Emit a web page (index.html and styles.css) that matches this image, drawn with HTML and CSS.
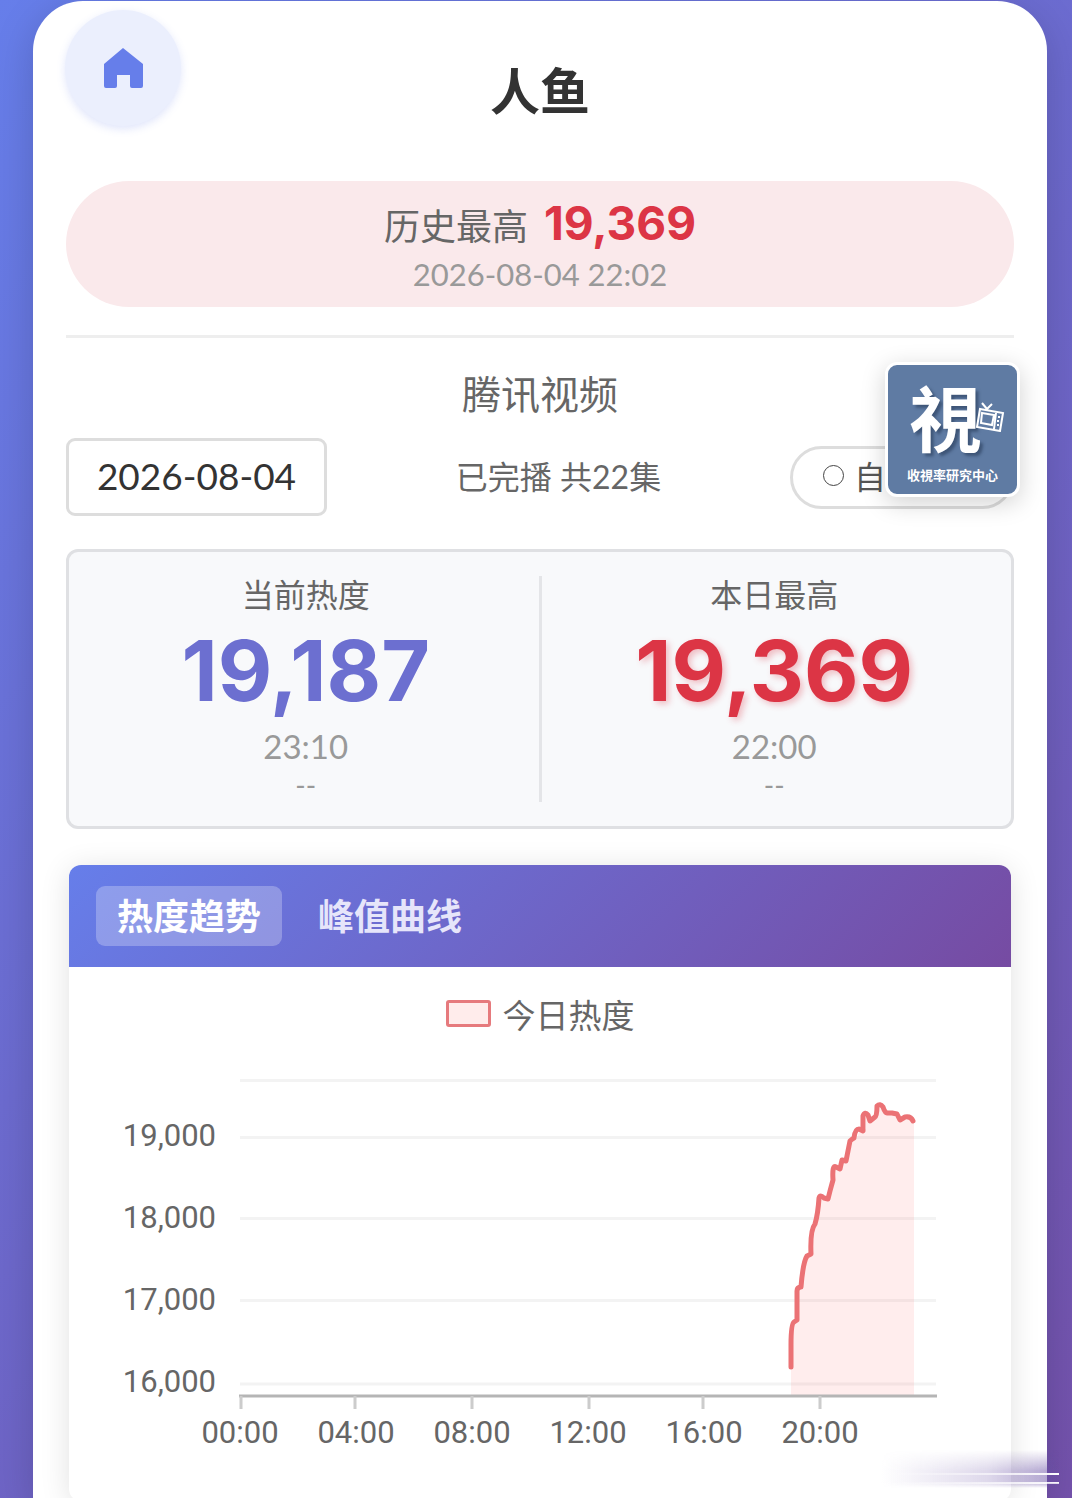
FILE: index.html
```html
<!DOCTYPE html>
<html lang="zh-CN">
<head>
<meta charset="utf-8">
<meta name="viewport" content="width=device-width, initial-scale=1">
<title>人鱼</title>
<link rel="stylesheet" href="styles.css">
</head>
<body>
<main class="container">
  <header class="header">
    <a class="home" href="#" aria-label="首页">
      <svg viewBox="0 0 40 40" width="40" height="40" aria-hidden="true"><path d="M20 0 L40 16 V38 Q40 40 38 40 H29 Q27 40 27 38 V27 H14 V38 Q14 40 12 40 H3 Q1 40 1 38 V16 Z"/></svg>
    </a>
    <h1 class="title">人鱼</h1>
  </header>

  <section class="record">
    <div class="record-line"><span class="record-label">历史最高</span><strong class="record-value">19,369</strong></div>
    <time class="record-time">2026-08-04 22:02</time>
  </section>

  <section class="platform">
    <h2 class="platform-name">腾讯视频</h2>
    <div class="controls">
      <input class="date" type="text" value="2026-08-04" aria-label="日期">
      <span class="status">已完播 共22集</span>
      <button class="toggle" type="button"><span class="dot"></span>自</button>
    </div>
  </section>

  <section class="stats">
    <div class="stat">
      <span class="stat-label">当前热度</span>
      <strong class="stat-value">19,187</strong>
      <time class="stat-time">23:10</time>
      <span class="stat-note">--</span>
    </div>
    <div class="divider"></div>
    <div class="stat">
      <span class="stat-label">本日最高</span>
      <strong class="stat-value peak">19,369</strong>
      <time class="stat-time">22:00</time>
      <span class="stat-note">--</span>
    </div>
  </section>

  <section class="chart-card">
    <nav class="tabs">
      <button class="tab active" type="button">热度趋势</button>
      <button class="tab" type="button">峰值曲线</button>
    </nav>
    <div class="legend"><span class="swatch"></span>今日热度</div>
    <svg class="chart" viewBox="0 0 942 438" role="img" aria-label="今日热度">
      <g class="grid">
        <path d="M171 20.500H867M171 77.500H867M171 158.500H867M171 240.500H867M171 324H867"/>
      </g>
      <path class="area" d="M722 307L723 270L725 262L728 260L728 228L733 224L737 198L742 194L743 174L745 164L748 155L751 136L755 138L759 140L761 136L765 120L765 109L770 107L772 110L775 100L779 100L784 80L788 78L791 69L797 69L797 54L801 54L803 60L808 57L810 46L815 47L818 53L828 55L831 59L838 57L845 61V335H722Z"/>
      <path class="line" d="M722 307L722 285Q722 264 725 262L728 260L728 231Q728 227 732 227Q734 202 738 196L742 194Q741 170 746 164Q749 154 750 138Q751 134 755 138L759 139L761 131L764 120Q763 104 767 107L771 109L773 100L777 101L781 81Q783 79 785 78Q786 69 790 69L794 71L794 56Q796 51 799 55L801 61L806 57Q808 56 808 46Q811 43 814 47Q816 53 818 53L823 53L828 54L831 60L836 57Q842 56 844 61"/>
      <g class="axis"><path d="M170 336H868"/><path class="ticks" d="M172 336V349M286 336V349M403 336V349M520 336V349M634 336V349M751 336V349"/></g>
      <g class="y-labels">
        <text x="147" y="86">19,000</text><text x="147" y="168">18,000</text><text x="147" y="250">17,000</text><text x="147" y="332">16,000</text>
      </g>
      <g class="x-labels">
        <text x="171" y="383">00:00</text><text x="287" y="383">04:00</text><text x="403" y="383">08:00</text><text x="519" y="383">12:00</text><text x="635" y="383">16:00</text><text x="751" y="383">20:00</text>
      </g>
    </svg>
  </section>
</main>

<aside class="badge" aria-label="收視率研究中心">
  <span class="badge-mark">視</span>
  <svg class="badge-tv" viewBox="0 0 32 32" width="32" height="32" aria-hidden="true"><path d="M5 9L28 13L25 31L2 27ZM7 13L19 15L17 25L6 23ZM21 13L19 29M12 9L7 3M12 9L17 4"/><path d="M23 17H25M22 21H24M22 25H24"/></svg>
  <span class="badge-name">收視率研究中心</span>
</aside>
<div class="smear" aria-hidden="true"></div>
</body>
</html>
```
FILE: styles.css
```css
* { box-sizing: border-box; }
body {
  position: relative;
  margin: 0;
  min-height: 100vh;
  padding: 1px 25px 0 33px;
  font-family: Lato, "Noto Sans CJK SC", sans-serif;
  color: #666;
  background: linear-gradient(135deg, #667eea 0%, #764ba2 115%);
}
button, input { font-family: inherit; }
.container {
  min-height: calc(100vh - 1px);
  padding: 0 33px;
  background: #fff;
  border-radius: 50px 50px 0 0;
  box-shadow: 0 10px 40px rgba(0, 0, 0, .17);
}
.header {
  position: relative;
  display: flex;
  align-items: center;
  justify-content: center;
  height: 180px;
}
.home {
  position: absolute;
  left: -1px;
  top: 9px;
  display: flex;
  align-items: center;
  justify-content: center;
  width: 116px;
  height: 116px;
  border-radius: 50%;
  background: #ebeffd;
  box-shadow: 0 3px 9px rgba(102, 126, 234, .2);
  fill: #667eea;
}
.title { margin: 0; font-size: 50px; line-height: 60px; color: #333; }
.record {
  display: flex;
  flex-direction: column;
  align-items: center;
  height: 126px;
  padding-top: 12px;
  border-radius: 63px;
  background: #fae9eb;
}
.record-line { display: flex; align-items: baseline; gap: 16px; height: 65px; line-height: 60px; }
.record-label { font-size: 36px; }
.record-value { font-family: Inter, sans-serif; font-size: 46px; color: #dc3545; }
.record-time { font-size: 31px; line-height: 32px; color: #999; }
.platform { margin-top: 28px; border-top: 3px solid #eee; padding-top: 31px; }
.platform-name { margin: 0; font-size: 39px; font-weight: 400; line-height: 50px; text-align: center; }
.controls {
  display: flex;
  align-items: center;
  justify-content: space-between;
  margin-top: 19px;
}
.date {
  width: 261px;
  height: 78px;
  padding: 0 0 4px;
  border: 3px solid #ddd;
  border-radius: 9px;
  background: #fff;
  font-size: 37px;
  text-align: center;
  color: #333;
}
.status { padding-bottom: 4px; font-size: 32px; }
.toggle {
  display: flex;
  align-items: center;
  gap: 10px;
  width: 224px;
  height: 63px;
  padding: 0 30px 4px;
  border: 3px solid #ddd;
  border-radius: 32px;
  background: #fff;
  font-size: 32px;
  color: #555;
}
.dot { width: 21px; height: 21px; border: 1px solid #444; border-radius: 50%; }
.stats {
  display: grid;
  grid-template-columns: 1fr 3px 1fr;
  margin-top: 33px;
  padding: 24px 4px;
  border: 3px solid #dfe0e3;
  border-radius: 12px;
  background: #f8f9fb;
}
.stat { display: flex; flex-direction: column; align-items: center; height: 226px; }
.divider { background: #e4e5e8; }
.stat-label { font-size: 32px; line-height: 38px; }
.stat-value { font-family: Inter, sans-serif; font-size: 84px; line-height: 114px; color: #6c6fd0; }
.stat-value.peak { color: #dc3545; text-shadow: 3px 3px 6px rgba(220, 53, 69, .3); }
.stat-time { font-size: 33px; line-height: 36px; color: #999; }
.stat-note { font-size: 28px; line-height: 42px; color: #999; }
.chart-card {
  margin: 36px 3px 0;
  padding-bottom: 3px;
  border-radius: 12px;
  background: #fff;
  box-shadow: 0 4px 30px rgba(0, 0, 0, .12);
}
.tabs {
  display: flex;
  align-items: center;
  gap: 15px;
  height: 102px;
  padding: 0 27px;
  border-radius: 12px 12px 0 0;
  background: linear-gradient(135deg, #667eea 0%, #764ba2 100%);
}
.tab {
  height: 60px;
  padding: 0 21px;
  border: 0;
  border-radius: 9px;
  background: none;
  font-size: 36px;
  font-weight: 700;
  line-height: 60px;
  color: #e6e5fa;
}
.tab.active { background: rgba(255, 255, 255, .26); color: #fff; }
.legend {
  display: flex;
  align-items: center;
  justify-content: center;
  gap: 12px;
  height: 93px;
  font-size: 33px;
}
.swatch { width: 45px; height: 27px; border: 3px solid #e67a7d; border-radius: 3px; background: #ffeceb; }
.chart { display: block; width: 100%; }
.grid { stroke: #f3f3f3; stroke-width: 3; fill: none; }
.area { fill: #ff6b6b; fill-opacity: .12; }
.line { fill: none; stroke: #eb7275; stroke-width: 5; stroke-linejoin: round; stroke-linecap: round; }
.axis { stroke: #b5b5b5; stroke-width: 3; fill: none; }
.ticks { stroke: #ccc; }
.y-labels, .x-labels { font-family: Roboto, sans-serif; font-size: 31px; fill: #666; }
.y-labels { text-anchor: end; }
.x-labels { text-anchor: middle; }
.badge {
  position: absolute;
  top: 362px;
  right: 52px;
  width: 135px;
  height: 135px;
  border: 3px solid #fff;
  border-radius: 12px;
  background: #5f7ba3;
  box-shadow: 0 6px 24px rgba(0, 0, 0, .18);
  color: #fff;
  text-align: center;
}
.badge-mark {
  display: block;
  padding-right: 14px;
  font-family: "Noto Sans CJK TC", sans-serif;
  font-size: 72px;
  font-weight: 700;
  line-height: 100px;
  text-shadow: 3px 3px 3px rgba(40, 60, 90, .6);
}
.badge-tv { position: absolute; left: 87px; top: 35px; fill: #5f7ba3; stroke: #fff; stroke-width: 2; }
.badge-name { display: block; font-size: 13px; font-weight: 700; line-height: 20px; }
.smear {
  position: absolute;
  right: 13px;
  top: 1450px;
  width: 178px;
  height: 38px;
  background:
    linear-gradient(90deg, transparent, #fff) 0 23px / 100% 2px no-repeat,
    linear-gradient(90deg, transparent, #fff) 0 32px / 100% 2px no-repeat,
    linear-gradient(90deg, transparent, rgba(105, 80, 165, .22) 60%, rgba(105, 80, 165, .5) 94%, transparent);
  mask-image: linear-gradient(transparent, #000 55%, #000 85%, transparent);
}
```
